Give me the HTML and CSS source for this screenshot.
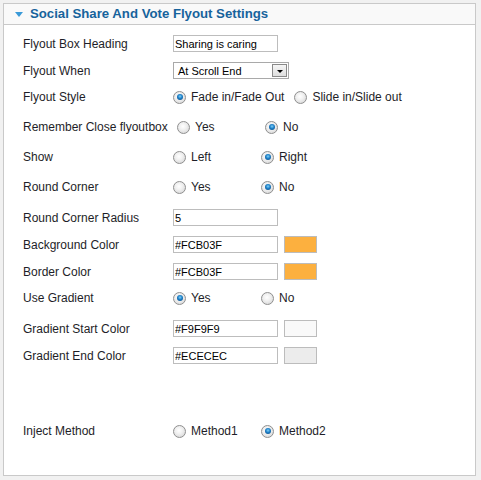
FILE: index.html
```html
<!DOCTYPE html>
<html>
<head>
<meta charset="utf-8">
<link rel="stylesheet" href="styles.css">
</head>
<body>
<div class="panel">
  <div class="panel-head">
    <span class="caret"></span>
    <h3 class="title">Social Share And Vote Flyout Settings</h3>
  </div>
  <div class="panel-body">
    <div class="row">
      <span class="label">Flyout Box Heading</span>
      <input class="field" type="text" value="Sharing is caring">
    </div>
    <div class="row">
      <span class="label">Flyout When</span>
      <div class="select"><span class="select-text">At Scroll End</span><span class="select-btn"><span class="arrow"></span></span></div>
    </div>
    <div class="row row-radio">
      <span class="label">Flyout Style</span>
      <span class="opt"><span class="radio on"></span>Fade in/Fade Out</span>
      <span class="opt"><span class="radio"></span>Slide in/Slide out</span>
    </div>
    <div class="row row-radio">
      <span class="label label-wide">Remember Close flyoutbox</span>
      <span class="opt"><span class="radio"></span>Yes</span>
      <span class="opt"><span class="radio on"></span>No</span>
    </div>
    <div class="row row-radio">
      <span class="label">Show</span>
      <span class="opt"><span class="radio"></span>Left</span>
      <span class="opt"><span class="radio on"></span>Right</span>
    </div>
    <div class="row row-radio">
      <span class="label">Round Corner</span>
      <span class="opt"><span class="radio"></span>Yes</span>
      <span class="opt"><span class="radio on"></span>No</span>
    </div>
    <div class="row">
      <span class="label">Round Corner Radius</span>
      <input class="field" type="text" value="5">
    </div>
    <div class="row">
      <span class="label">Background Color</span>
      <input class="field" type="text" value="#FCB03F">
      <span class="swatch sw-orange"></span>
    </div>
    <div class="row">
      <span class="label">Border Color</span>
      <input class="field" type="text" value="#FCB03F">
      <span class="swatch sw-orange"></span>
    </div>
    <div class="row row-radio">
      <span class="label">Use Gradient</span>
      <span class="opt"><span class="radio on"></span>Yes</span>
      <span class="opt"><span class="radio"></span>No</span>
    </div>
    <div class="row">
      <span class="label">Gradient Start Color</span>
      <input class="field" type="text" value="#F9F9F9">
      <span class="swatch sw-start"></span>
    </div>
    <div class="row">
      <span class="label">Gradient End Color</span>
      <input class="field" type="text" value="#ECECEC">
      <span class="swatch sw-end"></span>
    </div>
    <div class="row row-radio row-last">
      <span class="label">Inject Method</span>
      <span class="opt"><span class="radio"></span>Method1</span>
      <span class="opt"><span class="radio on"></span>Method2</span>
    </div>
  </div>
</div>
</body>
</html>
```
FILE: styles.css
```css
html {
  background: #f1f1f1;
}
body {
  margin: 0;
  padding: 3px;
  font-family: "Liberation Sans", Arial, sans-serif;
  font-size: 12px;
  color: #1e1e28;
}
.panel {
  width: 473px;
  height: 473px;
  box-sizing: border-box;
  border: 1px solid #c9c9c9;
  background: #fff;
}
.panel-head {
  height: 20px;
  display: flex;
  align-items: center;
  gap: 7px;
  padding-left: 11px;
  background: #f9f9f9;
  border-bottom: 1px solid #c9c9c9;
}
.caret {
  width: 0;
  height: 0;
  border-left: 4px solid transparent;
  border-right: 4px solid transparent;
  border-top: 5px solid #3a9ad8;
  margin-top: 1px;
}
.title {
  margin: 0;
  font-size: 13.2px;
  font-weight: bold;
  color: #17639c;
  line-height: 20px;
}
.panel-body {
  padding: 5px 0 0 19px;
}
.row {
  height: 27px;
  display: flex;
  align-items: center;
}
.row-radio {
  height: 30px;
  box-sizing: border-box;
  padding-bottom: 4px;
}
.row-last {
  margin-top: 49px;
}
.label {
  width: 150px;
  flex-shrink: 0;
}
.label-wide {
  width: 154px;
}
.field {
  width: 105px;
  height: 17px;
  box-sizing: border-box;
  margin: 0;
  padding: 0 1px;
  border: 1px solid #bdbdbd;
  font-family: "Liberation Sans", Arial, sans-serif;
  font-size: 11px;
  color: #000;
  background: #fff;
  outline: none;
}
.swatch {
  width: 33px;
  height: 17px;
  box-sizing: border-box;
  margin-left: 6px;
  border: 1px solid #bcbcbc;
}
.sw-orange { background: #fcb03f; }
.sw-start { background: #f9f9f9; }
.sw-end { background: #ececec; }
.select {
  width: 116px;
  height: 17px;
  box-sizing: border-box;
  border: 1px solid #a9a9a9;
  display: flex;
  align-items: center;
  justify-content: space-between;
  font-size: 11px;
  color: #000;
}
.select-text {
  padding-left: 4px;
}
.select-btn {
  width: 15px;
  height: 13px;
  box-sizing: border-box;
  margin-right: 1px;
  border: 1px solid #8a8a8a;
  background: linear-gradient(#f6f6f6, #dedede);
  display: flex;
  align-items: center;
  justify-content: center;
}
.arrow {
  width: 0;
  height: 0;
  border-left: 3px solid transparent;
  border-right: 3px solid transparent;
  border-top: 3px solid #000;
  margin-top: 2px;
}
.opt {
  display: flex;
  align-items: center;
  gap: 5px;
  min-width: 78px;
  margin-right: 10px;
}
.radio {
  width: 13px;
  height: 13px;
  box-sizing: border-box;
  border-radius: 50%;
  border: 1px solid #8f8f8f;
  background: radial-gradient(circle at 45% 40%, #ffffff 0, #f0f0f0 40%, #cfcfcf 100%);
  position: relative;
  flex-shrink: 0;
}
.radio.on::after {
  content: "";
  position: absolute;
  left: 2.5px;
  top: 2.5px;
  width: 6px;
  height: 6px;
  border-radius: 50%;
  background: radial-gradient(circle at 50% 40%, #7fd0f6 0, #1c7fc8 45%, #0b3f72 100%);
}
```
